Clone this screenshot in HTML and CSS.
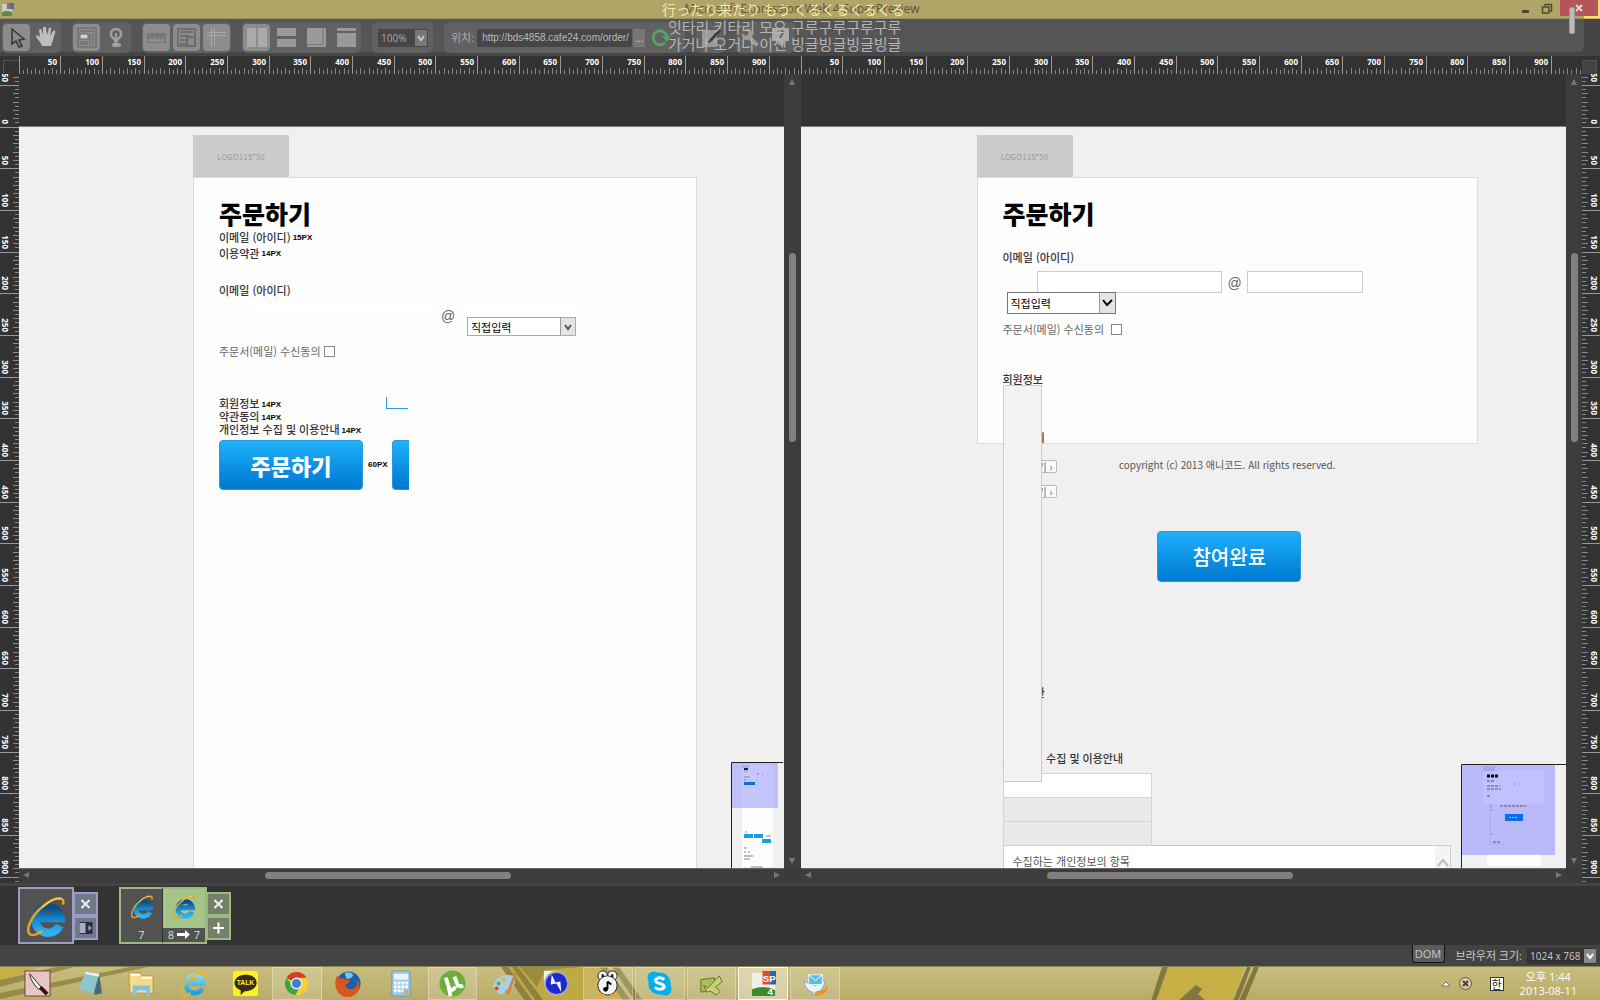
FILE: index.html
```html
<!DOCTYPE html>
<html lang="ko">
<head>
<meta charset="utf-8">
<title>Microsoft Expression Web 4 SuperPreview</title>
<link rel="stylesheet" href="styles.css">
</head>
<body>
<svg class="defs" aria-hidden="true">
  <defs>
    <linearGradient id="blue" x1="0" y1="0" x2="0" y2="1"><stop offset="0" stop-color="#0a4c86"/><stop offset=".45" stop-color="#1583cf"/><stop offset="1" stop-color="#2fb4f2"/></linearGradient>
    <linearGradient id="sky" x1="0" y1="0" x2="0" y2="1"><stop offset="0" stop-color="#7fdcf8"/><stop offset="1" stop-color="#1da0df"/></linearGradient>
    <symbol id="ie" viewBox="0 0 36 40">
      <path d="M31 29A12 12 0 1 1 32 22H12" fill="none" stroke="url(#blue)" stroke-width="8"/>
      <path d="M34 9C37 1 27 1 16 10C3 20-3 36 4 38C7 39 12 36 15 34" fill="none" stroke="#e5a41c" stroke-width="2.400"/>
      <path d="M32 4C27 2 20 7 14 12" fill="none" stroke="#ffe27a" stroke-width="1"/>
    </symbol>
  </defs>
</svg>

<div class="window-top">
  <div class="shade"></div>
  <header class="titlebar">
    <svg class="app-icon" width="14" height="15" viewBox="0 0 14 15"><rect x="1" y="2" width="10" height="12" fill="#c9cfc0"/><path d="M1 10q5-2 10 0v4H1z" fill="#5b8c4a"/><rect x="6" y="1" width="7" height="6" fill="#4a6ca8"/><rect x="6" y="1" width="3" height="6" fill="#c05a4a"/></svg>
    <h1 class="title">Microsoft Expression Web 4 SuperPreview</h1>
    <div class="window-buttons">
      <button aria-label="최소화"><svg width="9" height="14"><rect x="1" y="8" width="7" height="3" fill="#4e4a36"/></svg></button>
      <button aria-label="이전 크기로"><svg width="12" height="14"><path d="M4 4V2.500h6.500V9H9M1.500 5h6.500v6H1.500z" fill="none" stroke="#4e4a36" stroke-width="1.500"/></svg></button>
      <button class="close" aria-label="닫기"><svg width="38" height="16"><path d="M16 5l6 6m0-6l-6 6" stroke="#e6d5d5" stroke-width="2"/></svg></button>
    </div>
  </header>
  <div class="toolbar">
    <div class="group">
      <button class="on" aria-label="선택"><svg viewBox="0 0 27 27"><path d="M9 5v15l4-3 3 6 3-1-3-6 5-1z" fill="#8a8a8a" stroke="#333" stroke-width="1.500"/></svg></button>
      <button aria-label="이동"><svg viewBox="0 0 27 27"><path d="M9 22c-1-4-6-8-6-10 1-2 3 0 4 1L6 6c1-2 3-1 3 1l1 4V4c1-2 3-1 3 0l1 7 2-7c1-1 3 0 2 2l-1 6 3-5c2-1 3 0 2 2-1 5-3 9-4 13z" fill="#bdbdbd"/></svg></button>
    </div>
    <div class="group">
      <button class="on" aria-label="상자"><svg viewBox="0 0 27 27" fill="none" stroke="#666"><rect x="5" y="4" width="18" height="19"/><path d="M7 7h14M7 20h8M17 10v11M20 10v11M7 18h8"/><rect x="7" y="10" width="8" height="5" fill="#d0d0d0"/></svg></button>
      <button aria-label="강조"><svg viewBox="0 0 27 27"><circle cx="13" cy="10" r="5" fill="none" stroke="#a0a0a0" stroke-width="2.500"/><path d="M10 15l2 4h2l2-4" fill="#a0a0a0"/><path d="M13 9v9" stroke="#a0a0a0" stroke-width="2"/><rect x="9" y="19" width="9" height="4" rx="2" fill="#a0a0a0"/></svg></button>
    </div>
    <div class="group">
      <button class="on" aria-label="눈금자"><svg viewBox="0 0 27 27"><rect x="4" y="9" width="19" height="10" fill="#777"/><path d="M6 18v-3m2 3v-4m2 4v-3m2 3v-5m2 5v-3m2 3v-4m2 4v-3m2 3v-5" stroke="#a0a0a0"/></svg></button>
      <button class="on" aria-label="축소판"><svg viewBox="0 0 27 27" fill="none" stroke="#666" stroke-width="1.500"><rect x="5" y="5" width="17" height="17"/><path d="M7 8h13M7 12h8v8H7M7 16h7"/><rect x="14" y="13" width="8" height="9" fill="#888"/></svg></button>
      <button class="on" aria-label="안내선"><svg viewBox="0 0 27 27" fill="none" stroke="#a8a8a8"><path d="M4 8.500h19M4 11.500h19M8.500 4v19M11.500 4v19"/></svg></button>
    </div>
    <div class="group">
      <button class="on" aria-label="세로 분할"><svg viewBox="0 0 27 27" fill="#aaa"><path d="M4 4h9v19H4zM15 4h9v19h-9z"/></svg></button>
      <button aria-label="가로 분할"><svg viewBox="0 0 27 27" fill="#999"><path d="M4 4h19v8H4zM4 15h19v8H4z"/></svg></button>
      <button aria-label="겹쳐 보기"><svg viewBox="0 0 27 27" fill="#999"><path d="M4 4h19v19H4z"/><path d="M4 20.500h16V4" stroke="#777" fill="none"/></svg></button>
      <button aria-label="단일 보기"><svg viewBox="0 0 27 27" fill="#999"><path d="M4 4h19v3H4zM4 9h19v14H4z"/></svg></button>
    </div>
    <div class="group">
      <span class="combo zoom"><select aria-label="배율"><option>100%</option></select><svg viewBox="0 0 12 16"><path d="M3 6l3 4 3-4" fill="none" stroke="#c8c8c8" stroke-width="2"/></svg></span>
    </div>
    <div class="group address">
      <label for="loc">위치:</label>
      <input id="loc" type="text" value="http://bds4858.cafe24.com/order/">
      <button class="browse" aria-label="찾아보기">...</button>
      <button class="refresh" aria-label="새로 고침"><svg viewBox="0 0 20 20"><path d="M14 15A7 7 0 1 1 16 8" fill="none" stroke="#56a26a" stroke-width="3"/><path d="M11 8h8l-3 6z" fill="#56a26a"/></svg></button>
    </div>
    <div class="group">
      <button aria-label="편집"><svg viewBox="0 0 27 27"><rect x="5" y="6" width="15" height="17" fill="#999"/><path d="M22 5l-9 10-3 5 5-3 9-10z" fill="#3e3e3e"/></svg></button>
    </div>
    <div class="group">
      <button aria-label="도구"><svg viewBox="0 0 27 27"><path d="M8 5l4 4-3 3-4-3c-1 5 2 8 7 7l7 7 3-3-7-7c2-5-2-9-7-8z" fill="#999"/></svg></button>
      <button aria-label="도움말"><svg viewBox="0 0 27 27"><path d="M5 4h17v13h-5l-1 6-5-6H5z" fill="#aaa"/><path d="M11 8q5-3 5 1-2 3-3 5" fill="none" stroke="#666" stroke-width="2"/></svg></button>
    </div>
  </div>
  <div class="lyrics"><p class="ja" lang="ja">行ったり来たり もう くるくるくるくる</p><p>잇타리 키타리 모오 구루구루구루구루</p><p>가거나 오거나 이젠 빙글빙글빙글빙글</p></div>
  <div class="grip"></div>
</div>

<main class="workspace">
  <div class="corner"></div>
  <div class="ruler across" data-origin="0"></div>
  <div class="ruler across" data-origin="0"></div>
  <div class="corner end"></div>

  <div class="ruler down" data-origin="53"></div>

  <section class="pane">
    <div class="view">
      <div class="page base">
        <div class="logo">LOGO115*50</div>
        <div class="card">
          <h2>주문하기</h2>
          <p class="note">이메일 (아이디)<b>15PX</b></p>
          <p class="note">이용약관<b>14PX</b></p>
          <label class="note email" for="l-id">이메일 (아이디)</label>
          <div class="mail-row">
            <input id="l-id" class="wide" type="text">
            <span class="at">@</span>
            <div class="domain">
              <input type="text" aria-label="도메인">
              <span class="combo light"><select aria-label="도메인 선택"><option>직접입력</option></select><svg viewBox="0 0 14 17"><path d="M4 7l3 4 3-4" fill="none" stroke="#555" stroke-width="2"/></svg></span>
            </div>
          </div>
          <div class="agree"><label for="l-ag">주문서(메일) 수신동의</label><input id="l-ag" type="checkbox"></div>
          <div class="sheet">
            <p class="note small">회원정보<b>14PX</b></p>
            <p class="note small">약관동의<b>14PX</b></p>
            <p class="note small">개인정보 수집 및 이용안내<b>14PX</b></p>
            <span class="edge"></span>
          </div>
          <div class="buttons"><button class="blue strong">주문하기</button><b>60PX</b><span class="blue cut"></span></div>
        </div>
      </div>
      <svg class="map narrow" width="52" height="106" viewBox="0 0 52 106">
        <rect width="52" height="106" fill="#f0f0f0"/><rect x="11" y="3" width="31" height="102" fill="#fdfdfd"/><rect x="11" y="3" width="7" height="3" fill="#ccc"/>
        <path d="M13 9h3M26 12h2m3 1h1M13 15h6M13 18h2m10 0h1" stroke="#777"/>
        <rect x="1" y="1" width="46" height="45" fill="#8f8fff" opacity=".5"/>
        <rect x="13" y="6" width="4" height="2" fill="#222"/><rect x="13" y="20" width="11" height="3" fill="#0a6fd8"/><rect x="13" y="72" width="9" height="4" fill="#189de8"/><rect x="23" y="72" width="9" height="4" fill="#189de8"/><rect x="31" y="77" width="9" height="4" fill="#189de8"/>
        <path d="M14 70h2M35 74h5M13 86h3M13 90h2m2 0h2M13 97h6M20 105h12" stroke="#888"/><path d="M13 94h9" stroke="#bbb" stroke-width="2"/>
        <path d="M.5 106V.5H52" fill="none" stroke="#222"/>
      </svg>
    </div>
    <div class="vbar"><i class="up"></i><span></span><i class="dn"></i></div>
    <div class="hbar"><i class="lt"></i><span></span><i class="rt"></i></div>
    <div class="joint"></div>
  </section>

  <section class="pane second">
    <div class="view">
      <div class="page">
        <div class="logo">LOGO115*50</div>
        <div class="card short">
          <h2>주문하기</h2>
          <label class="note lead" for="r-id">이메일 (아이디)</label>
          <div class="mail-row boxed">
            <input id="r-id" class="wide" type="text">
            <span class="at">@</span>
            <input type="text" aria-label="도메인">
          </div>
          <span class="combo light tall"><select aria-label="도메인 선택"><option>직접입력</option></select><svg viewBox="0 0 15 20"><path d="M3 7l4 5 5-5" fill="none" stroke="#000" stroke-width="2"/></svg></span>
          <div class="agree"><label for="r-ag">주문서(메일) 수신동의</label><input id="r-ag" type="checkbox"></div>
          <p class="note small member">회원정보</p>
          <div class="spill">
            <div class="strip"></div>
            <p class="note small s1">약관동의</p>
            <button class="more m1">보기 ›</button>
            <button class="more m2">보기 ›</button>
            <p class="note small s2">이용약관</p>
            <p class="note small s3">개인정보 수집 및 이용안내</p>
            <div class="rows"><div></div><div></div><div></div></div>
            <div class="terms"><p>수집하는 개인정보의 항목</p><svg width="15" height="24"><path d="M3 20l5-6 5 6" fill="none" stroke="#bbb" stroke-width="2"/></svg></div>
          </div>
        </div>
        <p class="copyright">copyright (c) 2013 애니코드. All rights reserved.</p>
        <button class="blue done">참여완료</button>
      </div>
      <svg class="map" width="105" height="104" viewBox="0 0 105 104">
        <rect width="105" height="104" fill="#f0f0f0"/><rect x="22" y="2" width="12" height="5" fill="#ccc"/><rect x="22" y="7" width="61" height="33" fill="#fff"/>
        <path d="M29 39v43m0-2h14v8" fill="none" stroke="#ccc"/><rect x="26" y="90" width="54" height="12" fill="#fff"/>
        <rect x="1" y="1" width="93" height="90" fill="#8383ff" opacity=".5"/>
        <path d="M26 12h11" stroke="#000" stroke-width="3" stroke-dasharray="3 1"/><path d="M26 17h8M53 20h1M26 22h13M26 25h14M26 32h4M30 42h1m8 0h26M30 46h1M30 70h1M32 78h7" stroke="#556" stroke-dasharray="3 1"/>
        <rect x="44" y="50" width="18" height="7" fill="#0a6fe8"/><path d="M48 53.500h9" stroke="#9cf" stroke-dasharray="2 1"/>
        <path d="M.5 104V.5H105" fill="none" stroke="#222"/>
      </svg>
    </div>
    <div class="vbar"><i class="up"></i><span></span><i class="dn"></i></div>
    <div class="hbar"><i class="lt"></i><span></span><i class="rt"></i></div>
    <div class="joint"></div>
  </section>

  <div class="ruler down end" data-origin="53"></div>
</main>

<div class="tray">
  <div class="browser violet">
    <div class="cell big"><svg width="38" height="42"><use href="#ie"/></svg></div>
    <div class="side"><button aria-label="닫기"><svg viewBox="0 0 20 20"><path d="M6 6l8 8m0-8l-8 8" stroke="#eee" stroke-width="2"/></svg></button><button aria-label="전환"><svg viewBox="0 0 20 20"><rect x="4" y="4" width="13" height="12" fill="#2e2e38"/><rect x="4" y="5" width="6" height="10" fill="#a9adcb"/><path d="M13 7l3 3-3 3z" fill="#a9adcb"/></svg></button></div>
  </div>
  <div class="browser green">
    <div class="cell"><div class="face"><svg width="22" height="25"><use href="#ie"/></svg></div><span>7</span></div>
    <div class="cell active"><div class="face"><svg width="22" height="25"><use href="#ie"/></svg></div><span>8 <svg width="14" height="9"><path d="M0 3h8V0l5 4.500L8 9V6H0z" fill="#fff"/></svg> 7</span></div>
    <div class="side"><button aria-label="닫기"><svg viewBox="0 0 20 20"><path d="M6 6l8 8m0-8l-8 8" stroke="#eee" stroke-width="2"/></svg></button><button aria-label="추가"><svg viewBox="0 0 20 20"><path d="M4.500 10h11M10 4.500v11" stroke="#fff" stroke-width="2"/></svg></button></div>
  </div>
</div>

<div class="status">
  <button class="dom">DOM</button>
  <label for="size">브라우저 크기:</label>
  <span class="combo size"><select id="size"><option>1024 x 768</option></select><svg viewBox="0 0 12 14"><path d="M3 5l3 4 3-4" fill="none" stroke="#fff" stroke-width="2"/></svg></span>
</div>

<footer class="taskbar">
  <svg class="wall" width="1600" height="34" viewBox="0 0 1600 34" aria-hidden="true">
    <path d="M0 0H40L0 14z" fill="#c6b045"/><path d="M56 0h18L0 20v-7zM130 0h18L0 32v-6z" fill="#8c8340" opacity=".8"/>
    <path d="M505 0h95l30 34H535z" fill="#bfa943"/><path d="M501 0h7l25 34h-8zM512 0h6l26 34h-8z" fill="#8d833f"/><path d="M520 0h60l-35 3-8 17z" fill="#9b8c40"/><path d="M600 0h7l24 34h-8zM612 0h7l24 34h-8z" fill="#8d833f"/>
    <path d="M1165 0h80l-14 34h-80z" fill="#c6b045"/><path d="M1168 0l-12 34h-5l11-34zM1178 34l18-16 6 4-4 5 8 7zM1247 0h4l-13 34h-5zM1254 0h5l-14 34h-6z" fill="#81783f"/>
  </svg>
  <nav class="apps">
    <button aria-label="칼"><svg viewBox="0 0 28 28"><rect x="1" y="1" width="26" height="26" fill="#e9c4c4" stroke="#6b4141"/><path d="M6 4l12 14-3 2C11 16 6 9 6 4z" fill="#f4f4f4" stroke="#222"/><path d="M17 18l7 7" stroke="#311" stroke-width="4"/></svg></button>
    <button aria-label="메모장"><svg viewBox="0 0 28 28"><path d="M10 2l14 2-5 20-17-4z" fill="#8cc5cc"/><path d="M24 4l3 20-8 2V22z" fill="#476a72"/><path d="M10 2l14 2v3L9 4z" fill="#e8f4f4"/></svg></button>
    <button aria-label="탐색기"><svg viewBox="0 0 28 28"><path d="M1 7V3h12l2 3h11v18H2z" fill="#f3dc8a" stroke="#b8963e"/><path d="M3 5h9M15 8h10" stroke="#fff" stroke-width="2"/><path d="M5 27V16h18v11h-4v-6H9v6z" fill="#7cc4e8"/></svg></button>
    <button aria-label="인터넷"><svg viewBox="0 0 28 28"><path d="M23 19A9 9 0 1 1 24 14H9" fill="none" stroke="url(#sky)" stroke-width="5"/><path d="M26 7c1-6-5-6-13 0C3 14-1 23 3 26c2 1 5 0 8-2" fill="none" stroke="#e8b62a" stroke-width="2"/></svg></button>
    <button aria-label="톡"><svg viewBox="0 0 28 28"><rect x="1" y="1" width="26" height="26" rx="3" fill="#fff01e"/><path d="M14 5c16 0 15 17-1 17l-4 4v-5C-2 17 2 5 14 5z" fill="#372a1e"/><text x="14" y="16" text-anchor="middle" class="talk">TALK</text></svg></button>
    <button class="open" aria-label="크롬"><svg viewBox="0 0 28 28"><circle cx="14" cy="14" r="12" fill="#f7cf2e"/><path d="M14 14L3.600 8A12 12 0 0 1 24.400 8H14z" fill="#d93a2b"/><path d="M3.600 8A12 12 0 0 0 13 26l5-10-9-1z" fill="#3aa346"/><circle cx="14" cy="14" r="5.500" fill="#3f83d6" stroke="#eee" stroke-width="1.500"/></svg></button>
    <button aria-label="파이어폭스"><svg viewBox="0 0 28 28"><circle cx="14" cy="14" r="12.500" fill="#1f5fa8"/><path d="M10 3q6-2 9 2-2 5-7 4z" fill="#7fc4ea"/><path d="M2 6l4 3q3-1 5 1l4 1q0 3-4 4 0 5 6 5 7-1 6-10 6 10-3 16-10 6-17-3-5-8-1-17z" fill="#d9571c"/></svg></button>
    <button aria-label="계산기"><svg viewBox="0 0 28 28"><rect x="5" y="1" width="19" height="26" rx="1" fill="#9cc8e6" stroke="#6a9cc4"/><rect x="7" y="4" width="15" height="6" fill="#e9f4fb"/><path d="M7 13.500h15M7 17.500h15M7 21.500h10" stroke="#fff" stroke-width="3" stroke-dasharray="3 1"/><path d="M18 23h4" stroke="#e9a23a" stroke-width="4"/></svg></button>
    <button class="open" aria-label="토렌트"><svg viewBox="0 0 28 28"><circle cx="14" cy="14" r="13.500" fill="#6cae3e"/><path d="M7 8l4 12q4 2 6-3M16 7l3 8q2 3 6 1M10 18l2 9" fill="none" stroke="#fff" stroke-width="4"/></svg></button>
    <button aria-label="그림판"><svg viewBox="0 0 28 28"><path d="M2 18C3 8 14 3 23 6c5 4 1 14-6 14-4 0-2 5-7 5-4 1-3-6-8-7z" fill="#a8cfe6"/><circle cx="8" cy="14" r="2" fill="#5caa48"/><circle cx="13" cy="10" r="2" fill="#e3b02b"/><circle cx="6" cy="19" r="2" fill="#cf4a3f"/><path d="M26 3l-9 22" stroke="#d08342" stroke-width="3"/></svg></button>
    <button aria-label="번개"><svg viewBox="0 0 28 28"><path d="M1 1h15v12H1z" fill="#f5f5f5"/><circle cx="14" cy="14" r="12" fill="#1b2bd0" stroke="#aab" stroke-width="2"/><path d="M9 5l-1 10 6-1 5 9-1-11-5 1z" fill="#fff"/></svg></button>
    <button class="open" aria-label="음악"><svg viewBox="0 0 28 28"><circle cx="9" cy="6" r="5" fill="#f5f5f5" stroke="#222"/><circle cx="19" cy="6" r="5" fill="#f5f5f5" stroke="#222"/><circle cx="14" cy="16" r="10" fill="#f5f5f5" stroke="#222"/><path d="M8 6h2m8 0h2" stroke="#000" stroke-width="3"/><path d="M14 12v8m0-8l4 3" stroke="#000" stroke-width="2"/><circle cx="12" cy="20" r="2.500"/><path d="M4 26h7m6 0h7" stroke="#e9a23a" stroke-width="3"/></svg></button>
    <button class="open" aria-label="스카이프"><svg viewBox="0 0 28 28"><circle cx="14" cy="14" r="11.500" fill="#00aff0"/><circle cx="8" cy="8" r="6.500" fill="#00aff0"/><circle cx="20" cy="20" r="6.500" fill="#00aff0"/><path d="M19 10q-5-4-9 0-1 3 4 4t5 4q-4 4-10 0" fill="none" stroke="#fff" stroke-width="3"/></svg></button>
    <button class="open" aria-label="편집기"><svg viewBox="0 0 28 28"><path d="M3 10l14-2v12L3 23z" fill="#a8c05a" stroke="#65722b"/><path d="M6 16l4 3L22 6l3 6-7 6 5 4-4 4-6-4-4 1z" fill="#c5d273" stroke="#65722b"/></svg></button>
    <button class="open front" aria-label="슈퍼프리뷰"><svg viewBox="0 0 28 28"><rect x="2" y="3" width="24" height="24" fill="#eef0ea"/><path d="M2 20q14-5 24 1v6H2z" fill="#3c8a2e"/><rect x="13" y="1" width="7" height="14" fill="#e1492f"/><rect x="20" y="1" width="7" height="14" fill="#2f64b5"/><text x="20" y="12" text-anchor="middle" class="sp">SP</text><text x="21" y="26" text-anchor="middle" class="sp">4</text></svg></button>
    <button class="open" aria-label="메일"><svg viewBox="0 0 28 28"><path d="M3 14q5 14 20 6 5-4 3-9 3 15-11 16z" fill="#e8952a"/><path d="M2 11q12 10 22-1-1 12-10 13l-1 4-2-4Q3 21 2 11z" fill="#e8f1f6" stroke="#8aa"/><rect x="7" y="5" width="14" height="10" fill="#62b7e6" stroke="#dff"/><path d="M7 5l7 6 7-6" fill="none" stroke="#fff"/></svg></button>
  </nav>
  <div class="notify">
    <svg width="8" height="6"><path d="M0 5l4-4 4 4z" fill="#fff" stroke="#777"/></svg>
    <svg width="15" height="15"><circle cx="7.500" cy="7.500" r="6" fill="#d8cf9f" stroke="#5f5a3c"/><path d="M5 5l5 5m0-5l-5 5" stroke="#444" stroke-width="2"/></svg>
    <span class="ime">한</span>
    <div class="clock">오후 1:44<br>2013-08-11</div>
  </div>
</footer>
<script src="script.js"></script>
</body>
</html>
```
FILE: styles.css
```css
* { box-sizing: border-box; }
html, body { height: 100%; }
body {
  margin: 0;
  display: flex;
  flex-direction: column;
  min-height: 100vh;
  overflow: hidden;
  background: #444;
  font: 12px/16px "Open Sans", "Noto Sans CJK KR", sans-serif;
}
h1, h2, p { margin: 0; }
button, input, select { font: inherit; margin: 0; padding: 0; border: 0; border-radius: 0; }
button { background: none; color: inherit; }
select { appearance: none; }
.defs { position: absolute; width: 0; height: 0; }

/* title bar and toolbar */
.window-top { position: relative; height: 56px; background: #454545; }
.shade { position: absolute; inset: 0 16px 4px 0; background: rgba(102,102,102,.48); border-radius: 0 0 6px 0; z-index: 1; }
.titlebar { position: relative; height: 19px; display: flex; align-items: center; background: #f4de68; border-bottom: 1px solid #c9b85e; }
.titlebar > * { position: relative; z-index: 2; }
.app-icon { margin-left: 1px; }
.title { flex: 1; padding-left: 68px; text-align: center; font: 12px/18px "Open Sans", sans-serif; color: #5b563f; }
.window-buttons { display: flex; gap: 11px; margin-right: 2px; height: 18px; }
.window-buttons svg { display: block; }
.window-buttons .close { background: #b55558; height: 16px; margin-left: -4px; }
.toolbar { position: relative; z-index: 2; display: flex; gap: 11px; padding: 3px 2px; }
.group { display: flex; align-items: center; gap: 3px; height: 31px; padding: 0 1px; background: #616161; border-radius: 5px; color: #aaa; }
.group button { width: 27px; height: 27px; border-radius: 4px; }
.group button svg { display: block; width: 100%; height: 100%; }
.group .on { background: #8c8c8c; }
.combo { position: relative; display: flex; }
.combo svg { position: absolute; right: 1px; top: 1px; height: calc(100% - 2px); pointer-events: none; background: #777; }
.combo select { width: 100%; height: 100%; }
.zoom { width: 50px; height: 18px; margin: 0 4px 0 5px; }
.zoom select { background: #464646; color: #aaa; font-size: 10px; padding-left: 3px; }
.group.address { padding: 0 7px; gap: 1px; font-size: 11px; }
.address input { width: 155px; height: 18px; margin-left: 2px; padding-left: 5px; background: #464646; color: #bbb; font: 10px/16px "Liberation Sans", sans-serif; border-radius: 2px; }
.group .browse { width: 12px; height: 18px; background: #777; color: #ccc; border-radius: 0; font-size: 10px; line-height: 16px; }
.group .refresh { width: 20px; height: 20px; margin: 0 7px 0 5px; }
.lyrics { position: absolute; z-index: 3; left: 662px; top: 1px; font: 15px/17px "Noto Sans CJK KR", sans-serif; color: #b4b4b4; white-space: nowrap; pointer-events: none; }
.lyrics p { margin-left: 6px; }
.lyrics .ja { margin-left: 0; color: #f3eaa8; font: 14px/17px "Noto Sans CJK JP", sans-serif; }
.grip { position: absolute; z-index: 4; right: 25px; top: 7px; width: 6px; height: 27px; border-radius: 2px; background: #bbb; border: 1px solid #999; }

/* rulers */
.workspace { flex: 1; min-height: 0; display: grid; grid-template-columns: 19px minmax(0, 1fr) minmax(0, 1fr) 18px; grid-template-rows: 18px minmax(0, 1fr); background: #333; border-bottom: 3px solid #444; }
.ruler { overflow: hidden; background: #333; }
.ruler svg { display: block; }
.ruler text { fill: #fff; font: bold 8px "Open Sans", sans-serif; text-anchor: end; }
.corner { margin: 4px 0 0 3px; border: 1px solid #555; border-width: 1px 0 0 1px; }
.corner.end { margin: 4px 3px 0 0; border-width: 1px 1px 0 0; background: #444; }

/* panes */
.pane { display: grid; grid-template-columns: minmax(0, 1fr) 17px; grid-template-rows: minmax(0, 1fr) 15px; }
.pane.second { grid-template-columns: minmax(0, 1fr) 16px; }
.view { position: relative; overflow: hidden; padding-top: 52px; display: flex; flex-direction: column; }
.page { flex: 1; display: flex; flex-direction: column; align-items: stretch; min-height: 0; padding: 8px 88px 0 176px; border-top: 1px solid #807c80; background: #f0f0f0; }
.page.base { padding: 8px 87px 0 174px; }
.logo { flex: none; width: 96px; height: 42px; background: #ccc; color: #999; font: 8px/44px "Noto Sans CJK KR", sans-serif; text-align: center; }
.card { position: relative; flex: 1; padding: 19px 0 0 25px; background: #fdfdfd; border: 1px solid #ddd; border-bottom: 0; }
.card.short { flex: none; height: 267px; border-bottom: 1px solid #ddd; }
.card h2 { font: 900 25px/32px "Noto Sans CJK KR", sans-serif; color: #000; }
.note { display: flex; align-items: center; gap: 2px; height: 16px; font: 500 11px/16px "Noto Sans CJK KR", sans-serif; color: #33333a; white-space: nowrap; }
.note b, .buttons b { font: bold 8px/12px "Liberation Sans", sans-serif; color: #000; }
.note b { padding-top: 2px; }
.note.small { height: 13px; line-height: 13px; }
.email { margin-top: 21px; }
.mail-row { display: flex; gap: 6px; margin: 6px 0 0 34px; }
.mail-row input { width: 116px; height: 12px; background: #fff; }
.mail-row .wide { width: 182px; }
.at { width: 13px; font: 14px/16px "Liberation Sans", sans-serif; color: #666; padding-top: 4px; }
.domain { display: flex; flex-direction: column; align-items: flex-end; gap: 1px; }
.light { width: 109px; height: 19px; }
.light select { background: #fff; border: 1px solid #aaa; padding-left: 3px; font: 11px/16px "Noto Sans CJK KR", sans-serif; color: #000; }
.light svg { background: #e4e4e4; border-left: 1px solid #999; }
.agree { display: flex; align-items: center; gap: 7px; margin-top: 7px; height: 16px; font: 11px/16px "Noto Sans CJK KR", sans-serif; color: #666; }
.base .agree { gap: 3px; }
.agree input { appearance: none; width: 11px; height: 11px; border: 1px solid #888; background: #fff; }
.sheet { position: relative; margin-top: 38px; }
.edge { position: absolute; left: 167px; top: 0; width: 22px; height: 12px; border: 1px solid #2b9be6; border-width: 0 0 1px 1px; }
.blue { background: linear-gradient(#20b2fa, #0a8de2 60%, #007ad0); border: 1px solid #2a98dd; border-radius: 4px; color: #fff; }
.buttons { display: flex; align-items: center; margin-top: 4px; height: 50px; }
.buttons b { margin: 0 4px 0 5px; width: 20px; }
.blue.strong { width: 144px; height: 50px; font: 900 22px/32px "Noto Sans CJK KR", sans-serif; }
.blue.cut { width: 17px; height: 50px; border-right: 0; border-radius: 4px 0 0 4px; }
.lead { margin-top: 20px; }
.boxed { margin-top: 6px; }
.boxed input { height: 22px; border: 1px solid #ccc; }
.boxed .wide { width: 185px; }
.light.tall { height: 22px; margin: -1px 0 0 4px; }
.tall select { border: 1px solid #777; }
.member { margin-top: 36px; }
.spill { position: absolute; left: 25px; top: 207px; width: 448px; }
.strip { position: absolute; z-index: 1; left: 0; top: 0; width: 39px; height: 397px; background: #f3f3f3; border: 1px solid #ccc; }
.s1 { margin-top: 46px; padding-left: 2px; }
.more { display: block; width: 54px; height: 13px; padding-right: 3px; border: 1px solid #bbb; border-radius: 2px; background: #fafafa; color: #666; font: 10px/11px "Noto Sans CJK KR", sans-serif; text-align: right; }
.m1 { margin-top: 16px; }
.m2 { margin-top: 12px; }
.s2 { margin-top: 188px; padding-left: 2px; }
.s3 { margin-top: 53px; }
.rows { width: 149px; margin-top: 8px; }
.rows div { height: 24px; border: 1px solid #d5d5d5; border-bottom: 0; background: #eaeaea; }
.rows div:first-child { background: #fff; }
.terms { display: flex; justify-content: space-between; height: 90px; border: 1px solid #ccc; background: #fff; padding-left: 9px; font: 11px/16px "Noto Sans CJK KR", sans-serif; color: #555; }
.terms p { padding-top: 7px; }
.terms svg { background: #f4f4f4; height: 100%; }
.copyright { margin-top: 13px; text-align: center; font: 10px/16px "Noto Sans CJK KR", sans-serif; color: #555; }
.blue.done { align-self: center; flex: none; width: 144px; height: 51px; margin: 58px 0 0 4px; font: 500 20px/32px "Noto Sans CJK KR", sans-serif; }
.map { position: absolute; right: 0; bottom: 0; }
.map.narrow { right: 1px; }

/* scroll bars */
.vbar, .hbar { display: flex; align-items: center; background: #3d3d3d; }
.joint { background: #3a3a3a; }
.vbar { flex-direction: column; padding: 5px 0 4px; }
.vbar span { width: 7px; height: 189px; margin-top: 168px; margin-bottom: auto; border-radius: 4px; background: #808080; }
.hbar { padding: 0 4px 2px; border-top: 1px solid #666; }
.hbar span { width: 246px; height: 7px; margin-left: 236px; margin-right: auto; border-radius: 4px; background: #808080; }
.vbar i, .hbar i { border: 3px solid transparent; }
.vbar .up { border-bottom: 6px solid #777; border-top: 0; }
.vbar .dn { border-top: 6px solid #777; border-bottom: 0; }
.hbar .lt { border-right: 6px solid #777; border-left: 0; }
.hbar .rt { border-left: 6px solid #777; border-right: 0; }

/* browser tray */
.tray { flex: none; height: 59px; padding: 1px 18px; display: flex; gap: 21px; background: #333; color: #ddd; }
.browser { display: flex; height: 57px; }
.cell { width: 44px; display: flex; flex-direction: column; background: #525252; border: 2px solid; border-right-width: 1px; text-align: center; font-size: 11px; }
.cell.big { width: 56px; border-right-width: 2px; align-items: center; justify-content: center; }
.face { height: 39px; padding-top: 5px; }
.cell svg { display: inline-block; }
.green .cell:first-child { border-right-color: #333; }
.cell + .cell { border-left: 0; border-right-width: 2px; }
.active .face { background: #a5c488; }
.cell span { line-height: 14px; white-space: nowrap; }
.side { display: flex; flex-direction: column; justify-content: center; }
.side button { width: 24px; height: 24px; border: 2px solid; border-left-width: 1px; }
.side svg { display: block; width: 100%; height: 100%; }
.violet .cell, .violet button { border-color: #9b9dc9; }
.violet button { background: #707988; }
.green .cell, .green button { border-color: #9cba7c; }
.green button { background: #75806a; }

/* status row */
.status { flex: none; height: 21px; display: flex; align-items: center; justify-content: flex-end; gap: 5px; padding-right: 4px; background: #434343; color: #ccc; font-size: 11px; }
.dom { width: 33px; height: 18px; margin: 0 6px 3px 0; background: #5c5c5c; border: 1px solid #111; border-top: 0; border-radius: 0 0 3px 3px; font-size: 11px; line-height: 16px; }
.size { width: 69px; height: 16px; }
.size select { background: #333; color: #ccc; padding-left: 3px; font-size: 10px; }
.size svg { width: 12px; background: #888; right: 0; }

/* taskbar */
.taskbar { position: relative; flex: none; height: 34px; display: flex; justify-content: space-between; overflow: hidden; background: linear-gradient(#c8bd7c, #b9ac6a); border-top: 1px solid #8a8455; padding: 0 23px 0 13px; }
.wall { position: absolute; left: 0; top: 0; }
.apps { position: relative; width: 827px; display: grid; grid-template-columns: repeat(16, 1fr); column-gap: 2px; }
.apps button { display: flex; align-items: center; justify-content: center; border: 1px solid transparent; }
.apps svg { width: 27px; height: 27px; }
.apps .open { background: rgba(255,255,255,.16); border-color: rgba(255,255,255,.3); }
.apps .front { background: rgba(255,255,255,.4); border-color: rgba(255,255,255,.8); }
.talk { fill: #fff01e; font: bold 7px "Liberation Sans", sans-serif; }
.sp { fill: #fff; font: bold 10px "Liberation Sans", sans-serif; }
.notify { position: relative; display: flex; align-items: center; gap: 8px; color: #fff; }
.ime { width: 14px; height: 14px; margin: 0 8px 0 9px; background: #fff; border: 1px solid #333; color: #111; font: 11px/12px "Noto Sans CJK KR", sans-serif; text-align: center; }
.clock { text-align: center; font-size: 11px; line-height: 14px; }
```
FILE: script.js
```js
// Rulers: 50 units every 125/3 px, a small tick every 5 units.
const NS = 'http://www.w3.org/2000/svg';
const STEP = 125 / 30;

function add(svg, name, attrs, text) {
  const el = document.createElementNS(NS, name);
  for (const key in attrs) el.setAttribute(key, attrs[key]);
  if (text !== undefined) el.textContent = text;
  svg.appendChild(el);
}

function draw(ruler) {
  const down = ruler.classList.contains('down');
  const flip = ruler.classList.contains('end');
  const w = ruler.clientWidth, h = ruler.clientHeight;
  const origin = Number(ruler.dataset.origin);
  const length = down ? h : w;
  const svg = document.createElementNS(NS, 'svg');
  svg.setAttribute('width', w);
  svg.setAttribute('height', h);
  for (let i = Math.ceil(-origin / STEP); origin + i * STEP < length; i++) {
    const p = Math.floor(origin + i * STEP);
    const major = i % 10 === 0;
    const size = major ? 19 : i % 2 ? 4 : 6;
    const fill = major ? '#999' : '#888';
    if (down) add(svg, 'rect', { x: flip ? 0 : w - size, y: p, width: size, height: 1, fill });
    else add(svg, 'rect', { x: p, y: h - size, width: 1, height: size, fill });
    if (major && (down || i > 0)) {
      const label = Math.abs(i * 5);
      if (down) add(svg, 'text', { transform: `translate(${flip ? 9 : 2} ${p - 3}) rotate(90)` }, label);
      else add(svg, 'text', { x: p - 3, y: 9 }, label);
    }
  }
  ruler.replaceChildren(svg);
}

function drawAll() { document.querySelectorAll('.ruler').forEach(draw); }
addEventListener('resize', drawAll);
drawAll();
```
